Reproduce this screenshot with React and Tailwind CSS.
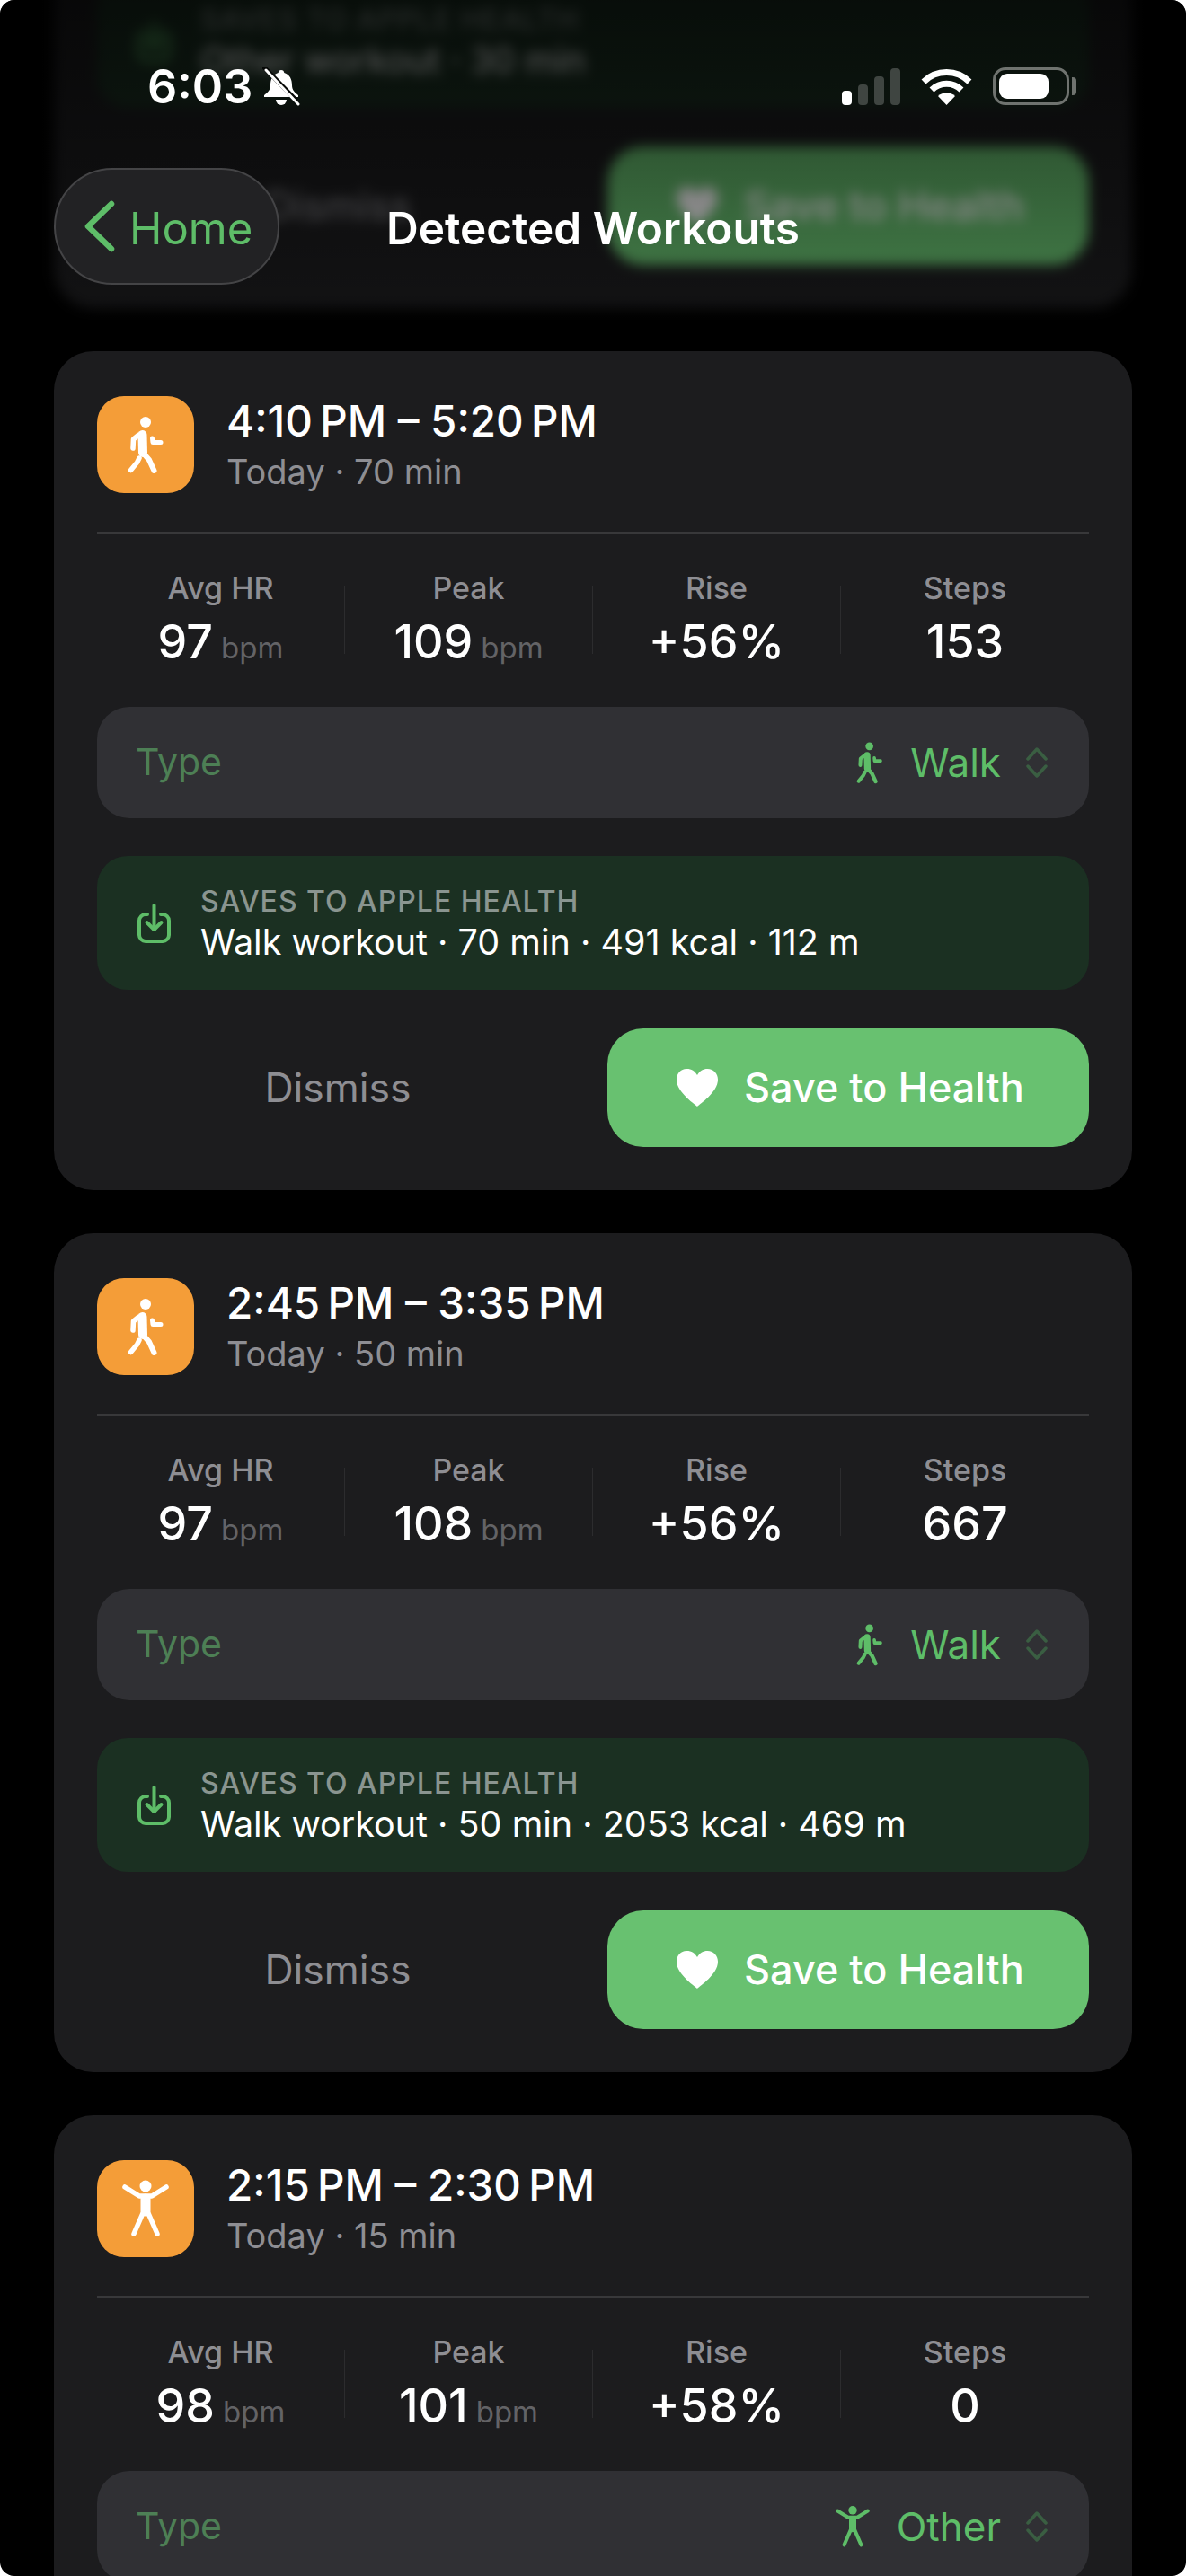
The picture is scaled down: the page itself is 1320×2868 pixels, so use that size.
const workouts = [
  {
    time: '4:10\u202fPM – 5:20\u202fPM',
    sub: 'Today · 70 min',
    avg: 97,
    peak: 109,
    rise: '+56%',
    steps: 153,
    type: 'Walk',
    detail: 'Walk workout · 70 min · 491 kcal · 112 m',
  },
  {
    time: '2:45\u202fPM – 3:35\u202fPM',
    sub: 'Today · 50 min',
    avg: 97,
    peak: 108,
    rise: '+56%',
    steps: 667,
    type: 'Walk',
    detail: 'Walk workout · 50 min · 2053 kcal · 469 m',
  },
  {
    time: '2:15\u202fPM – 2:30\u202fPM',
    sub: 'Today · 15 min',
    avg: 98,
    peak: 101,
    rise: '+58%',
    steps: 0,
    type: 'Other',
    detail: 'Other workout · 15 min',
  },
];

function WalkIcon({ className }) {
  return (
    <svg viewBox="34 20 41 66" className={className} fill="none" stroke="currentColor" strokeLinecap="round" strokeLinejoin="round">
      <circle cx="54" cy="28" r="6" fill="currentColor" stroke="none" />
      <path d="M50.5 42 L51 62" strokeWidth="10" />
      <path d="M46 42.5 L40.5 47 L40 57" strokeWidth="5.5" />
      <path d="M51 62 L58 70 L63.5 82" strokeWidth="6" />
      <path d="M47 68 L44.5 73 L37.5 81.5" strokeWidth="5.5" />
      <path d="M61.5 46 L62 50.5 L71 50.5" strokeWidth="5" />
    </svg>
  );
}

function FigureIcon({ className }) {
  return (
    <svg viewBox="28 20 52 66" className={className} fill="none" stroke="currentColor" strokeLinecap="round" strokeLinejoin="round">
      <circle cx="54" cy="28" r="6.5" fill="currentColor" stroke="none" />
      <path d="M54 42 L54 56" strokeWidth="11" />
      <path d="M31 29 L47 39 L61 39 L77 29" strokeWidth="5.5" />
      <path d="M51 58 L41 81" strokeWidth="5.5" />
      <path d="M57 58 L67 81" strokeWidth="5.5" />
    </svg>
  );
}

function SaveIcon() {
  return (
    <svg viewBox="0 0 46 52" className="w-[46px] h-[52px] shrink-0 text-[#5ebd68]" fill="none" stroke="currentColor" strokeWidth="4" strokeLinecap="round" strokeLinejoin="round">
      <path d="M15 16 H13 a7 7 0 0 0 -7 7 V39 a7 7 0 0 0 7 7 H32 a7 7 0 0 0 7 -7 V23 a7 7 0 0 0 -7 -7 H30" />
      <path d="M22.5 6 V33" />
      <path d="M14.5 25 L22.5 33 L30.5 25" />
    </svg>
  );
}

function HeartIcon() {
  return (
    <svg viewBox="0 0 46 42" className="w-[46px] h-[42px] shrink-0" fill="white">
      <path d="M23 42 C20 39 0 26 0 12 C0 5 5 0 11.5 0 C16.5 0 20.5 2.5 23 7 C25.5 2.5 29.5 0 34.5 0 C41 0 46 5 46 12 C46 26 26 39 23 42 Z" />
    </svg>
  );
}

function UpDown() {
  return (
    <svg viewBox="0 0 24 34" className="w-[24px] h-[34px] shrink-0" fill="none" stroke="#3a5e42" strokeWidth="3.5" strokeLinecap="round" strokeLinejoin="round">
      <path d="M2 13 L12 2 L22 13" />
      <path d="M2 21 L12 32 L22 21" />
    </svg>
  );
}

function Stat({ label, value, unit, last }) {
  return (
    <div className={`h-[76px] flex flex-col items-center justify-center ${last ? '' : 'border-r border-[#2c2c2e]'}`}>
      <div className="text-[34px] leading-[40px] font-medium text-[#8e8e93]">{label}</div>
      <div className="mt-[10px] h-[60px] flex items-baseline gap-[9px] leading-[60px]">
        <span className="text-[52px] font-medium text-white">{value}</span>
        {unit && <span className="text-[33px] text-[#636366]">{unit}</span>}
      </div>
    </div>
  );
}

function SavesBox({ detail }) {
  return (
    <div className="h-[149px] rounded-[34px] bg-[#1b3022] pl-[41px] pr-[36px] flex items-center gap-[28px]">
      <SaveIcon />
      <div>
        <div className="text-[32px] leading-[42px] font-medium tracking-[1px] text-[#8a9590]">SAVES TO APPLE HEALTH</div>
        <div className="text-[39.5px] leading-[48px] text-white whitespace-nowrap">{detail}</div>
      </div>
    </div>
  );
}

function Actions() {
  return (
    <div className="mt-[43px] grid grid-cols-2 gap-[32px]">
      <div className="h-[132px] flex items-center justify-center text-[44.5px] text-[#8e8e93]">Dismiss</div>
      <div className="h-[132px] rounded-[40px] bg-[#68c170] pl-[77px] flex items-center gap-[29px] text-[45px] font-medium text-white">
        <HeartIcon />
        Save to Health
      </div>
    </div>
  );
}

function WorkoutCard({ w }) {
  const isWalk = w.type === 'Walk';
  return (
    <div className="rounded-[44px] bg-[#1c1c1e] px-[48px] pt-[50px] pb-[48px]">
      <div className="flex items-center gap-[36px]">
        <div className="w-[108px] h-[108px] rounded-[30px] bg-[#f49d38] flex items-center justify-center text-white">
          {isWalk ? <WalkIcon className="w-[41px] h-[66px]" /> : <FigureIcon className="w-[52px] h-[66px]" />}
        </div>
        <div>
          <div className="text-[47.5px] leading-[56px] font-medium text-white">{w.time}</div>
          <div className="mt-[4px] text-[38px] leading-[48px] text-[#8e8e93]">{w.sub}</div>
        </div>
      </div>
      <div className="mt-[43px] h-[2px] bg-[#38383a]" />
      <div className="mt-[58px] grid grid-cols-4">
        <Stat label="Avg HR" value={w.avg} unit="bpm" />
        <Stat label="Peak" value={w.peak} unit="bpm" />
        <Stat label="Rise" value={w.rise} />
        <Stat label="Steps" value={w.steps} last />
      </div>
      <div className="mt-[59px] h-[124px] rounded-[36px] bg-[#303034] pl-[43px] pr-[46px] flex items-center text-[44px]">
        <span className="text-[41px] text-[#4d7f55]">Type</span>
        <span className="ml-auto flex items-center text-[#5ebd68]">
          {isWalk ? <WalkIcon className="w-[30px] h-[48px]" /> : <FigureIcon className="w-[38px] h-[48px]" />}
          <span className="ml-[30px] mr-[28px]">{w.type}</span>
          <UpDown />
        </span>
      </div>
      <div className="mt-[42px]">
        <SavesBox detail={w.detail} />
      </div>
      <Actions />
    </div>
  );
}

function StatusBar() {
  return (
    <div className="absolute top-0 left-0 w-full h-[130px] text-white">
      <div className="absolute left-[164px] top-[66px] flex items-center">
        <span className="text-[52px] leading-[62px] font-semibold">6:03</span>
        <svg viewBox="0 0 42 44" className="ml-[11px] w-[42px] h-[44px]">
          <path fill="white" d="M21 3 c-2 0 -3 1 -3.3 3 C11 8 9 14 9 20 c0 5 -3 8 -7 11 v2 h38 v-2 c-4 -3 -7 -6 -7 -11 C33 14 31 8 24.3 6 C24 4 23 3 21 3z" />
          <path fill="white" d="M15 36 a6 6 0 0 0 12 0z" />
          <path d="M1 -1 L38 37" stroke="#070907" strokeWidth="5" />
          <path d="M4 3 L40 41" stroke="white" strokeWidth="3" strokeLinecap="round" />
        </svg>
      </div>
      <div className="absolute left-[937px] top-[75px] flex items-start">
        <div className="flex items-end gap-[7px] h-[42px]">
          <div className="w-[11px] h-[16px] rounded-[4px] bg-white" />
          <div className="w-[11px] h-[23px] rounded-[4px] bg-[#3f4541]" />
          <div className="w-[11px] h-[32px] rounded-[4px] bg-[#3f4541]" />
          <div className="w-[11px] h-[41px] rounded-[4px] bg-[#3f4541]" />
        </div>
        <svg viewBox="0 0 57 42" className="ml-[23px] w-[57px] h-[42px]" fill="none" stroke="white" strokeWidth="7">
          <path d="M3 16 A36.5 36.5 0 0 1 54 16" />
          <path d="M12 25 A23.5 23.5 0 0 1 45 25" />
          <path fill="white" stroke="none" d="M28.5 42 L19 32 A14 14 0 0 1 38 32 Z" />
        </svg>
        <div className="ml-[23px] w-[85px] h-[42px] rounded-[14px] border-[3px] border-[#6f736f] p-[4px] flex">
          <div className="w-[55px] h-full rounded-[9px] bg-white" />
        </div>
        <div className="ml-[3px] mt-[11px] w-[5px] h-[20px] rounded-r-[4px] bg-[#6f736f]" />
      </div>
    </div>
  );
}

function NavBar() {
  return (
    <div className="absolute top-[187px] left-[60px] right-[60px] h-[130px] flex items-center">
      <div className="h-[130px] w-[251px] rounded-full bg-[#222224] border-2 border-[#444446] flex items-center pl-[30px] text-[#5ebd68]">
        <svg viewBox="0 0 36 62" className="w-[36px] h-[62px]" fill="none" stroke="currentColor" strokeWidth="6.5" strokeLinecap="round" strokeLinejoin="round">
          <path d="M32 6 L6 31 L32 56" />
        </svg>
        <span className="ml-[16px] mt-[6px] text-[49px]">Home</span>
      </div>
      <div className="absolute inset-0 pt-[4px] flex items-center justify-center text-[49.5px] font-semibold text-white">Detected Workouts</div>
    </div>
  );
}

export default function App() {
  return (
    <div className="w-[1320px] h-[2868px] bg-white [font-family:Inter,sans-serif]">
      <div className="relative w-full h-full rounded-[16px] bg-black overflow-hidden">
        <div className="px-[60px] flex flex-col gap-[48px]">
          {/* previous card, scrolled under the nav bar */}
          <div className="-mt-[29px] rounded-b-[44px] bg-[#1c1c1e] px-[48px] pb-[48px] blur-[7px]">
            <SavesBox detail="Other workout · 30 min" />
            <Actions />
          </div>
          {workouts.map((w) => (
            <WorkoutCard key={w.time} w={w} />
          ))}
        </div>
        <div className="absolute top-0 left-0 w-full h-[391px] bg-[linear-gradient(to_bottom,rgba(0,0,0,0.72),rgba(0,0,0,0.35)_88%,rgba(0,0,0,0))]" />
        <StatusBar />
        <NavBar />
      </div>
    </div>
  );
}
